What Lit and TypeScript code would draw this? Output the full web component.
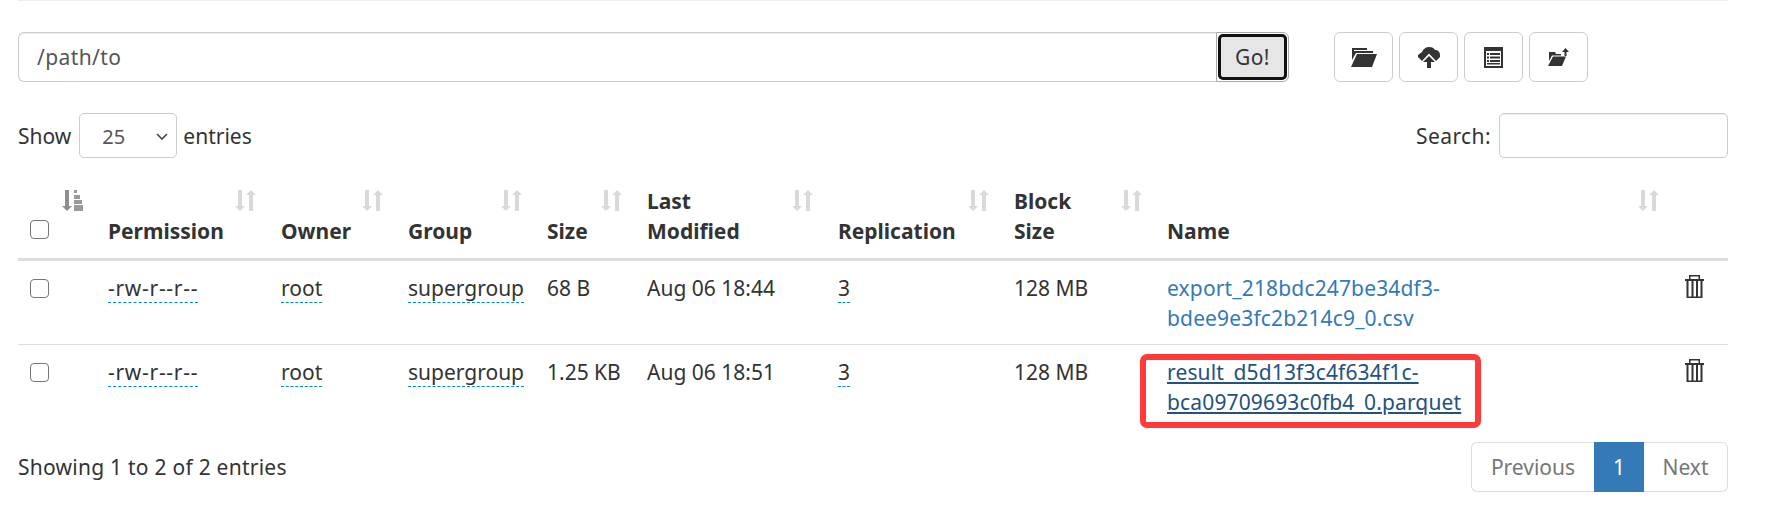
import { LitElement, css, html, svg } from 'lit';
import { customElement } from 'lit/decorators.js';

const columns = [
  { label: ['Permission'], width: 173 },
  { label: ['Owner'], width: 127 },
  { label: ['Group'], width: 139 },
  { label: ['Size'], width: 100 },
  { label: ['Last', 'Modified'], width: 191 },
  { label: ['Replication'], width: 176 },
  { label: ['Block', 'Size'], width: 153 },
  { label: ['Name'], width: 517 },
];

const rows = [
  { size: '68 B', modified: 'Aug 06 18:44', name: ['export_218bdc247be34df3-', 'bdee9e3fc2b214c9_0.csv'], marked: false },
  { size: '1.25 KB', modified: 'Aug 06 18:51', name: ['result_d5d13f3c4f634f1c-', 'bca09709693c0fb4_0.parquet'], marked: true },
];

const sortBoth = svg`<svg class="sort" viewBox="0 0 21 21"><path fill="#d9d9d9" d="M3 0h4v16h3l-5 5-5-5h3zM16 0l5 5h-3v16h-4V5h-3z"/></svg>`;
const sortActive = svg`<svg class="sort" viewBox="0 0 21 21"><path fill="#8f8f8f" d="M3 0h4v16h3l-5 5-5-5h3z"/><path fill="#9a9a9a" d="M12 0h3v3h-3zM12 5h6v4h-6zM12 10h8v4h-8zM12 15h9v6h-9z"/></svg>`;
const trash = svg`<svg class="trash" viewBox="0 0 19 23"><path fill="#333" d="M4 4V0h11v4h4v2H0V4zM5.500 4h8V1.500h-8zM1.500 6h2v15.500h3V6h2v15.500h2.500V6h2v15.500h2.500V6h2v17h-16z" fill-rule="evenodd"/></svg>`;

@customElement('app-root')
export class AppRoot extends LitElement {
  private renderRow(row: (typeof rows)[number]) {
    const editable = (text: string) => html`<span class="editable">${text}</span>`;
    return html`
      <tr>
        <td><span class="check"></span></td>
        <td class="perm">${editable('-rw-r--r--')}</td>
        <td>${editable('root')}</td>
        <td>${editable('supergroup')}</td>
        <td>${row.size}</td>
        <td>${row.modified}</td>
        <td>${editable('3')}</td>
        <td>128 MB</td>
        <td class="name">
          <a class="${row.marked ? 'hover' : ''}" href="#">${row.name[0]}<br />${row.name[1]}</a>
          ${row.marked ? html`<span class="mark"></span>` : ''}
        </td>
        <td class="del">${trash}</td>
      </tr>
    `;
  }

  render() {
    return html`
      <div class="page">
        <div class="toolbar">
          <div class="path">
            <div class="path-input">/path/to</div>
            <div class="go"><span>Go!</span></div>
          </div>
          <div class="tools">
            <div class="tool">
              <svg width="26" height="19" viewBox="0 0 26 19"><path fill="#333" d="M1 0h15v2H1zM1 2h2v1h19v2H5L1 12zM6 6h20l-5 13H0z"/></svg>
            </div>
            <div class="tool">
              <svg width="22" height="21" viewBox="0 0 22 21"><path fill="#333" d="M4 14L0 10V8l4-3c1-3 4-5 7-5s5 1 6 3c3 0 5 2 5 5v2l-4 4-7-7.500zM11 9l6 6h-4v6H9v-6H5z"/></svg>
            </div>
            <div class="tool">
              <svg width="19" height="21" viewBox="0 0 19 21"><path fill="#333" fill-rule="evenodd" d="M0 0h19v21H0zM2 4v15h15V4zM3 6h2v2H3zM6 6h10v2H6zM3 9.500h2v2H3zM6 9.500h10v2H6zM3 13h2v2H3zM6 13h10v2H6zM3 16h13v1.500H3z"/></svg>
            </div>
            <div class="tool">
              <svg width="21" height="18" viewBox="0 0 21 18"><path fill="#333" d="M1 4h6l1 2h5v1.500H4L1 13zM5 8.500h13L14 18H0zM17.500 0L21 4h-2.500v4h-2V4H14z"/></svg>
            </div>
          </div>
        </div>

        <div class="filters">
          <label class="length">
            Show
            <span class="select">25<svg width="12" height="7" viewBox="0 0 12 7"><path fill="none" stroke="#444" stroke-width="1.600" d="M1 1l5 5 5-5"/></svg></span>
            entries
          </label>
          <label class="search">Search:<span class="search-input"></span></label>
        </div>

        <table>
          <colgroup>
            <col style="width: 80px" />
            ${columns.map((c) => html`<col style="width: ${c.width}px" />`)}
            <col style="width: 54px" />
          </colgroup>
          <thead>
            <tr>
              <th><span class="check head-check"></span>${sortActive}</th>
              ${columns.map(
                (c) => html`<th>${c.label.map((l, i) => html`${i ? html`<br />` : ''}${l}`)}${sortBoth}</th>`,
              )}
              <th></th>
            </tr>
          </thead>
          <tbody>
            ${rows.map((r) => this.renderRow(r))}
          </tbody>
        </table>

        <div class="footer">
          <div class="info">Showing 1 to 2 of 2 entries</div>
          <div class="pager">
            <span class="prev">Previous</span>
            <span class="current">1</span>
            <span class="next">Next</span>
          </div>
        </div>
      </div>
    `;
  }

  static styles = css`
    :host {
      display: block;
      background: #fff;
      font-family: 'Noto Sans', sans-serif;
      font-size: 21px;
      line-height: 30px;
      color: #333;
    }

    .page {
      width: 1710px;
      height: 532px;
      box-sizing: border-box;
      padding: 31px 0 0;
      margin-left: 18px;
      border-top: 1px solid #eee;
    }

    .toolbar {
      display: flex;
      height: 50px;
    }

    .path {
      display: flex;
      width: 1271px;
    }

    .path-input {
      flex: 1;
      box-sizing: border-box;
      padding: 9px 18px;
      border: 1px solid #ccc;
      border-right: none;
      border-radius: 6px 0 0 6px;
      box-shadow: inset 0 1px 1px rgba(0, 0, 0, 0.075);
      color: #555;
      letter-spacing: 0.4px;
    }

    .go {
      width: 73px;
      box-sizing: border-box;
      padding: 1px;
      border: 1px solid #aaa;
      border-radius: 0 6px 6px 0;
    }

    .go span {
      display: block;
      height: 100%;
      box-sizing: border-box;
      border: 3px solid #111;
      border-radius: 5px;
      background: #e6e6e6;
      text-align: center;
      line-height: 40px;
      letter-spacing: 0.4px;
    }

    .tools {
      display: flex;
      gap: 6px;
      margin-left: 45px;
    }

    .tool {
      display: flex;
      align-items: center;
      justify-content: center;
      width: 59px;
      box-sizing: border-box;
      border: 1px solid #ccc;
      border-radius: 6px;
    }

    .filters {
      display: flex;
      justify-content: space-between;
      align-items: center;
      margin-top: 31px;
      height: 45px;
    }

    .length,
    .search {
      display: flex;
      align-items: center;
      gap: 6px;
    }

    .search {
      gap: 8px;
      letter-spacing: 0.4px;
    }

    .select {
      display: flex;
      align-items: center;
      justify-content: space-between;
      width: 98px;
      height: 45px;
      box-sizing: border-box;
      margin-left: 2px;
      padding: 2px 8px 0 22px;
      border: 1px solid #ccc;
      border-radius: 5px;
      color: #555;
      font-size: 20px;
    }

    .search-input {
      width: 229px;
      height: 45px;
      box-sizing: border-box;
      border: 1px solid #ccc;
      border-radius: 5px;
      box-shadow: inset 0 1px 1px rgba(0, 0, 0, 0.075);
    }

    table {
      table-layout: fixed;
      width: 1710px;
      margin-top: 19px;
      border-collapse: collapse;
    }

    th {
      position: relative;
      padding: 9px 10px 12px;
      text-align: left;
      vertical-align: bottom;
      border-bottom: 3px solid #ddd;
      font-weight: 700;
    }

    td {
      padding: 12px 10px 11px;
      vertical-align: top;
      border-bottom: 1px solid #ddd;
    }

    tbody tr:last-child td {
      border-bottom: none;
    }

    .check {
      display: block;
      width: 17px;
      height: 17px;
      margin: 6px 0 0 2px;
      border: 1px solid #767676;
      border-radius: 4px;
    }

    .head-check {
      margin: 0 0 7px 2px;
    }

    .sort {
      position: absolute;
      top: 13px;
      right: 15px;
      width: 21px;
      height: 21px;
    }

    .perm {
      letter-spacing: 0.7px;
    }

    .editable {
      border-bottom: 1px dashed #0088cc;
    }

    .name {
      position: relative;
      letter-spacing: 0.15px;
    }

    a {
      color: #337ab7;
      text-decoration: none;
    }

    a.hover {
      color: #23527c;
      text-decoration: underline;
    }

    .mark {
      position: absolute;
      left: -17px;
      top: 9px;
      width: 341px;
      height: 74px;
      box-sizing: border-box;
      border: 6px solid #ff3b3b;
      border-radius: 7px;
    }

    .del {
      padding-left: 11px;
    }

    .trash {
      display: block;
      width: 19px;
      height: 23px;
      margin-top: 2px;
    }

    .footer {
      display: flex;
      justify-content: space-between;
      align-items: center;
      margin-top: 14px;
    }

    .info {
      letter-spacing: 0.25px;
    }

    .pager {
      display: flex;
      height: 50px;
      line-height: 48px;
      color: #777;
    }

    .pager span {
      box-sizing: border-box;
      border: 1px solid #ddd;
      text-align: center;
    }

    .prev {
      width: 123px;
      border-right: none !important;
      border-radius: 6px 0 0 6px;
    }

    .current {
      width: 50px;
      background: #337ab7;
      border-color: #337ab7 !important;
      color: #fff;
    }

    .next {
      width: 84px;
      border-left: none !important;
      border-radius: 0 6px 6px 0;
    }
  `;
}
